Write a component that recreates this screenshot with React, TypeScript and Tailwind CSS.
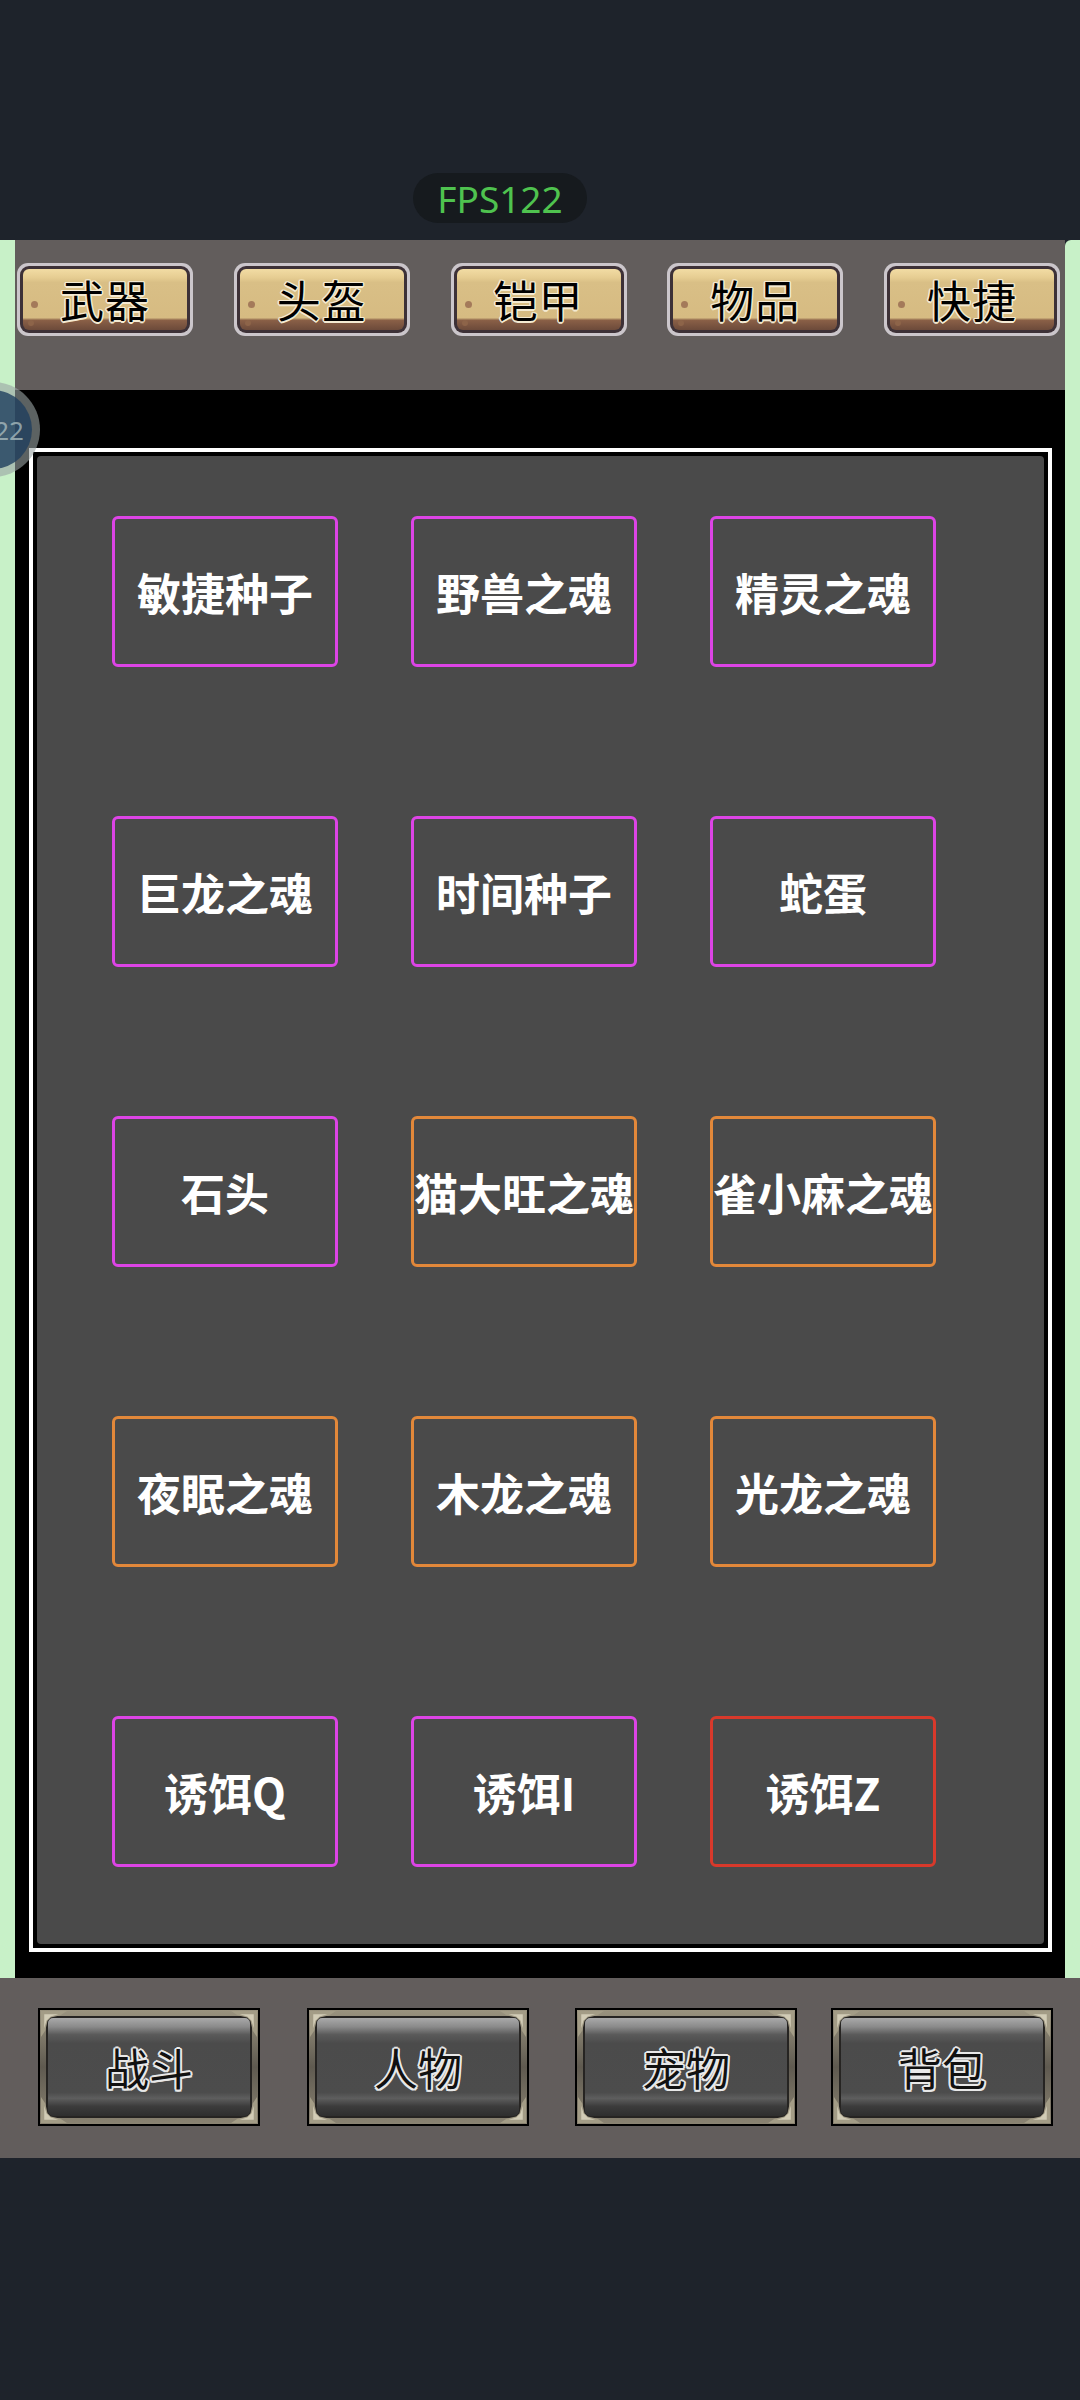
import React from 'react'

const tabs = ['武器', '头盔', '铠甲', '物品', '快捷']

const items = [
  { name: '敏捷种子', color: 'border-[#dd44e6]' },
  { name: '野兽之魂', color: 'border-[#dd44e6]' },
  { name: '精灵之魂', color: 'border-[#dd44e6]' },
  { name: '巨龙之魂', color: 'border-[#dd44e6]' },
  { name: '时间种子', color: 'border-[#dd44e6]' },
  { name: '蛇蛋', color: 'border-[#dd44e6]' },
  { name: '石头', color: 'border-[#dd44e6]' },
  { name: '猫大旺之魂', color: 'border-[#e2883a]' },
  { name: '雀小麻之魂', color: 'border-[#e2883a]' },
  { name: '夜眠之魂', color: 'border-[#e2883a]' },
  { name: '木龙之魂', color: 'border-[#e2883a]' },
  { name: '光龙之魂', color: 'border-[#e2883a]' },
  { name: '诱饵Q', color: 'border-[#dd44e6]' },
  { name: '诱饵I', color: 'border-[#dd44e6]' },
  { name: '诱饵Z', color: 'border-[#d8392b]' },
]

const navs = [
  { label: '战斗', gap: '' },
  { label: '人物', gap: 'ml-[47px]' },
  { label: '宠物', gap: 'ml-[46px]' },
  { label: '背包', gap: 'ml-[34px]' },
]

function TabButton({ label }: { label: string }) {
  return (
    <div className="w-[176px] h-[73px] rounded-[11px] bg-[#cbc6cb] p-[3px]">
      <div className="h-full rounded-[9px] bg-[#3d3137] p-[3px]">
        <div className="relative h-full rounded-[6px] bg-[linear-gradient(to_bottom,#f2dca4_0%,#e6cd92_14%,#d9bf86_22%,#d6bb82_80%,#8a6047_84%,#6c4a3a_100%)] flex items-center justify-center">
          <span className="absolute left-[8px] top-[32px] w-[7px] h-[7px] rounded-full bg-[#a47a5a]" />
          <span className="absolute left-[5px] bottom-[4px] w-[6px] h-[6px] rounded-full bg-[#8d6449]" />
          <span className="relative -mt-[2px] text-[44px] leading-[52px] text-black tracking-[1px] [text-shadow:1.5px_0_#f4ead2,-1.5px_0_#f4ead2,0_1.5px_#f4ead2,0_-1.5px_#f4ead2,1px_1px_#f4ead2,-1px_-1px_#f4ead2,1px_-1px_#f4ead2,-1px_1px_#f4ead2]">
            {label}
          </span>
        </div>
      </div>
    </div>
  )
}

function Corner({ className }: { className: string }) {
  return (
    <svg viewBox="0 0 24 24" className={`absolute w-[26px] h-[26px] ${className}`}>
      <path d="M0 0 L24 0 L18 4 L9 6 L6 9 L4 18 L0 24 Z" fill="#a39c86" />
      <path d="M3 3 L16 3 L9 5 L5 9 L3 16 Z" fill="#d2ccb6" />
    </svg>
  )
}

function NavButton({ label }: { label: string }) {
  return (
    <div className="w-[222px] h-[118px] bg-black p-[2px]">
      <div className="relative h-full bg-[linear-gradient(to_bottom,#9a937f,#5f5a50_50%,#8a8372)] p-[6px]">
        <div className="h-full rounded-[7px] border-2 border-[#262422] bg-[linear-gradient(to_bottom,#a9a9a9_0%,#8a8a8a_9%,#5a5a5a_17%,#4b4b4b_26%,#4c4c4c_76%,#5e5e5e_82%,#3c3c3c_90%,#2e2e2e_100%)] flex items-center justify-center">
          <span className="text-[44px] leading-[52px] text-[#111] [text-shadow:2px_0_#e8e8e8,-2px_0_#e8e8e8,0_2px_#e8e8e8,0_-2px_#e8e8e8,1.5px_1.5px_#e8e8e8,-1.5px_-1.5px_#e8e8e8,1.5px_-1.5px_#e8e8e8,-1.5px_1.5px_#e8e8e8]">
            {label}
          </span>
        </div>
        <Corner className="left-[1px] top-[1px]" />
        <Corner className="right-[1px] top-[1px] -scale-x-100" />
        <Corner className="left-[1px] bottom-[1px] -scale-y-100" />
        <Corner className="right-[1px] bottom-[1px] scale-[-1]" />
      </div>
    </div>
  )
}

export default function App() {
  return (
    <div className="relative w-[1080px] h-[2400px] bg-[#1e232b] overflow-hidden font-['Noto_Sans_CJK_SC','Noto_Sans',sans-serif]">
      {/* status bar */}
      <div className="h-[240px] flex items-end pb-[17px] pl-[413px]">
        <div className="w-[174px] h-[50px] rounded-full bg-[#161a1e] flex items-center justify-center">
          <span className="text-[37px] leading-none text-[#4fc34f] font-['Noto_Sans',sans-serif]">FPS122</span>
        </div>
      </div>

      {/* game area */}
      <div className="flex h-[1738px]">
        <div className="w-[15px] bg-[#c8f1c8]" />
        <div className="flex-1 flex flex-col">
          <div className="h-[150px] bg-[#625d5c] flex justify-between pl-[2px] pr-[5px] pt-[23px]">
            {tabs.map(t => <TabButton key={t} label={t} />)}
          </div>
          <div className="flex-1 bg-black pt-[58px] pl-[14px] pr-[13px] pb-[26px]">
            <div className="h-full border-[4px] border-white p-[4px]">
              <div className="h-full rounded-[4px] bg-[#4a4a4a] pl-[75px] pt-[60px]">
                <div className="grid grid-cols-[226px_226px_226px] gap-x-[73px] gap-y-[149px]">
                  {items.map(it => (
                    <div key={it.name} className={`h-[151px] rounded-[6px] border-[3px] ${it.color} flex items-center justify-center`}>
                      <span className="text-[44px] leading-none font-bold text-white whitespace-nowrap">{it.name}</span>
                    </div>
                  ))}
                </div>
              </div>
            </div>
          </div>
        </div>
        <div className="w-[15px] bg-[#c8f1c8] rounded-tl-[6px]" />
      </div>

      {/* bottom nav */}
      <div className="h-[180px] bg-[#625d5c] flex pl-[38px] pt-[30px]">
        {navs.map(n => (
          <div key={n.label} className={n.gap}>
            <NavButton label={n.label} />
          </div>
        ))}
      </div>

      {/* floating avatar */}
      <div className="absolute left-[-55px] top-[382px] w-[95px] h-[95px] rounded-full bg-[#9aa4a4]/60 p-[8px]">
        <div className="h-full rounded-full bg-[#1f3f5e]/80 flex items-center justify-end pr-[8px]">
          <span className="text-[26px] leading-none text-[#b8c8c8]/70 font-['Noto_Sans',sans-serif]">22</span>
        </div>
      </div>
    </div>
  )
}
